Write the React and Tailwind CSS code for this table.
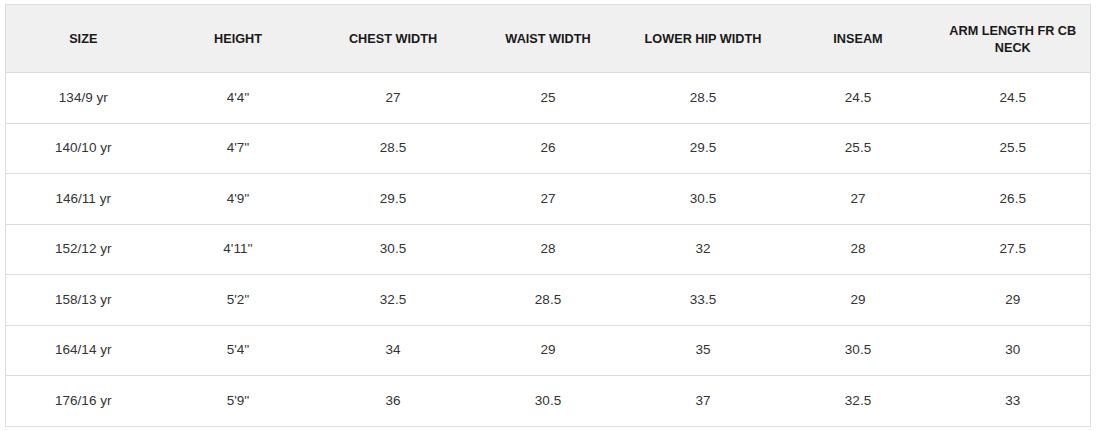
import React from "react";

const headers = ["SIZE", "HEIGHT", "CHEST WIDTH", "WAIST WIDTH", "LOWER HIP WIDTH", "INSEAM", "ARM LENGTH FR CB NECK"];
const rows = [
  ["134/9 yr", "4'4''", "27", "25", "28.5", "24.5", "24.5"],
  ["140/10 yr", "4'7''", "28.5", "26", "29.5", "25.5", "25.5"],
  ["146/11 yr", "4'9''", "29.5", "27", "30.5", "27", "26.5"],
  ["152/12 yr", "4'11''", "30.5", "28", "32", "28", "27.5"],
  ["158/13 yr", "5'2''", "32.5", "28.5", "33.5", "29", "29"],
  ["164/14 yr", "5'4''", "34", "29", "35", "30.5", "30"],
  ["176/16 yr", "5'9''", "36", "30.5", "37", "32.5", "33"],
];

export default function App() {
  return (
    <div className="w-[1099px] h-[431px] bg-white pt-[4px] pl-[5px]" style={{ fontFamily: '"Liberation Sans", Arial, sans-serif' }}>
      <table className="w-[1086px] table-fixed border-collapse border border-[#dcdcdc]">
        <thead>
          <tr className="h-[68px] bg-[#f0f0f0]">
            {headers.map((h) => (
              <th key={h} className="px-3 pt-[2px] text-center align-middle text-[12.7px] font-bold leading-[17px] text-[#1a1a1a] border-b border-[#dcdcdc]">
                {h}
              </th>
            ))}
          </tr>
        </thead>
        <tbody>
          {rows.map((r, i) => (
            <tr key={i} className="h-[50.5px] border-b border-[#dcdcdc]">
              {r.map((c, j) => (
                <td key={j} className="px-3 text-center align-middle text-[13.5px] text-[#333333]">
                  {c}
                </td>
              ))}
            </tr>
          ))}
        </tbody>
      </table>
    </div>
  );
}
